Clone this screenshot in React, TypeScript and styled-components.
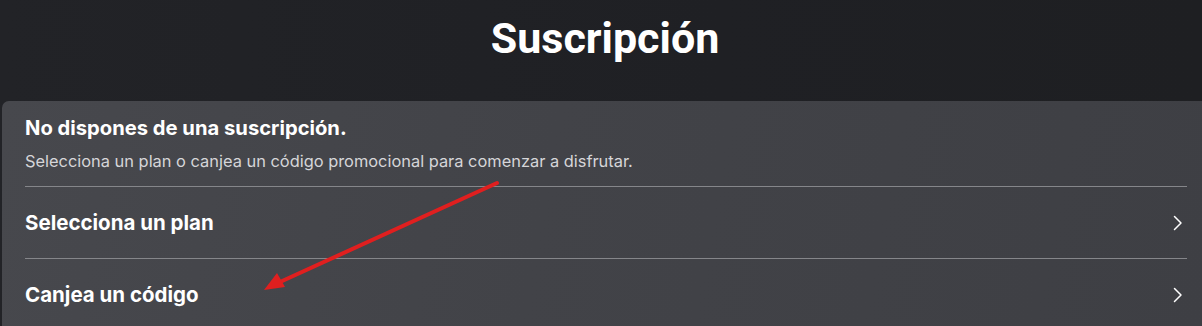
import React from "react";
import styled, { createGlobalStyle } from "styled-components";

const Global = createGlobalStyle`
  html, body { margin: 0; padding: 0; }
  body {
    background: #202125;
    font-family: Inter, Roboto, "Liberation Sans", Arial, sans-serif;
    overflow: hidden;
  }
`;

const Page = styled.div`
  position: relative;
  width: 1202px;
  height: 326px;
  overflow: hidden;
  background: linear-gradient(90deg, #222327 0%, #1f2024 60%, #1e1f22 100%);
`;

const Header = styled.header`
  height: 101px;
  box-sizing: border-box;
  padding: 13px 0 0 8px;
  display: flex;
  justify-content: center;
  align-items: flex-start;
`;

const Title = styled.h1`
  margin: 0;
  font-family: Roboto, "Liberation Sans", Arial, sans-serif;
  font-size: 43px;
  line-height: 50px;
  font-weight: 700;
  color: #ffffff;
`;

const Card = styled.section`
  margin-left: 2px;
  padding: 0 15px 0 23px;
  height: 240px;
  border-radius: 7px 0 0 0;
  background: linear-gradient(100deg, #47484d 0%, #424348 45%, #3e3f44 100%);
  display: flex;
  flex-direction: column;
`;

const Info = styled.div`
  padding: 15px 0 15px;
  display: flex;
  flex-direction: column;
  gap: 11px;
  border-bottom: 1px solid #85868a;
`;

const Heading = styled.h2`
  margin: 0;
  font-size: 20.2px;
  line-height: 24px;
  font-weight: 700;
  color: #ffffff;
`;

const Subtitle = styled.p`
  margin: 0;
  font-size: 16.4px;
  line-height: 20px;
  color: #d6d6d9;
`;

const Row = styled.div<{ $last?: boolean }>`
  height: 71px;
  display: flex;
  align-items: center;
  justify-content: space-between;
  padding-right: 4px;
  border-bottom: ${(p) => (p.$last ? "none" : "1px solid #85868a")};
`;

const RowLabel = styled.span`
  font-size: 20.5px;
  font-weight: 700;
  color: #ffffff;
`;

const Chevron = () => (
  <svg width="10" height="16" viewBox="0 0 10 16" fill="none">
    <path d="M1.5 1.5 L8 8 L1.5 14.5" stroke="#ffffff" strokeWidth="1.5" strokeLinecap="round" strokeLinejoin="round" />
  </svg>
);

const Overlay = styled.svg`
  position: absolute;
  left: 0;
  top: 0;
  pointer-events: none;
`;

export default function App() {
  return (
    <>
      <Global />
      <Page>
        <Header>
          <Title>Suscripción</Title>
        </Header>
        <Card>
          <Info>
            <Heading>No dispones de una suscripción.</Heading>
            <Subtitle>Selecciona un plan o canjea un código promocional para comenzar a disfrutar.</Subtitle>
          </Info>
          <Row>
            <RowLabel>Selecciona un plan</RowLabel>
            <Chevron />
          </Row>
          <Row $last>
            <RowLabel>Canjea un código</RowLabel>
            <Chevron />
          </Row>
        </Card>
        <Overlay width="1202" height="326" viewBox="0 0 1202 326">
          <line x1="497" y1="183" x2="280" y2="282" stroke="#e01f1f" strokeWidth="4" strokeLinecap="round" />
          <polygon points="264,290 277,273 285,287" fill="#e01f1f" />
        </Overlay>
      </Page>
    </>
  );
}
